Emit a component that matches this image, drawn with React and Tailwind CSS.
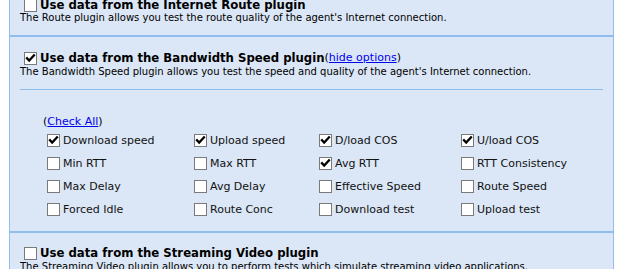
import React from "react";

const Box = ({ checked, className = "" }) => (
  <span
    className={`inline-flex h-[13px] w-[13px] shrink-0 items-center justify-center border border-[#7a7a7a] bg-white ${className}`}
  >
    {checked && (
      <svg width="11" height="11" viewBox="0 0 11 11">
        <path d="M2 5.2 L4.2 7.6 L9 2.4" fill="none" stroke="#000" strokeWidth="2.3" strokeLinecap="square" />
      </svg>
    )}
  </span>
);

const Title = ({ checked, children, extra }) => (
  <div className="flex h-[16px] items-center">
    <Box checked={checked} className="ml-[4px] mr-[3px]" />
    <span
      className="text-[13px] font-bold leading-[16px] text-black"
      style={{ fontFamily: '"DejaVu Sans Condensed", "DejaVu Sans", sans-serif', fontStretch: "condensed" }}
    >
      {children}
    </span>
    {extra}
  </div>
);

const Desc = ({ children, className = "" }) => (
  <div className={`h-[12px] text-[10px] leading-[12px] whitespace-nowrap text-black ${className}`}>{children}</div>
);

const items = [
  ["Download speed", true],
  ["Upload speed", true],
  ["D/load COS", true],
  ["U/load COS", true],
  ["Min RTT", false],
  ["Max RTT", false],
  ["Avg RTT", true],
  ["RTT Consistency", false],
  ["Max Delay", false],
  ["Avg Delay", false],
  ["Effective Speed", false],
  ["Route Speed", false],
  ["Forced Idle", false],
  ["Route Conc", false],
  ["Download test", false],
  ["Upload test", false],
];

export default function App() {
  return (
    <div
      className="h-[269px] w-[624px] overflow-hidden bg-white pl-[9px]"
      style={{ fontFamily: '"DejaVu Sans", Verdana, sans-serif' }}
    >
      <div className="h-[300px] w-[605px] border-x border-[#8ebdee] bg-[#dbe7f6]">
        {/* Section 1 */}
        <div className="border-b-2 border-[#8ebdee] px-[10px] pb-[11px]">
          <div className="mt-[-3px]">
            <Title checked={false}>Use data from the Internet Route plugin</Title>
          </div>
          <Desc className="mt-[-1px]">
            The Route plugin allows you test the route quality of the agent's Internet connection.
          </Desc>
        </div>

        {/* Section 2 */}
        <div className="border-b-2 border-[#8ebdee] px-[10px] pt-[13px] pb-[10px]">
          <Title
            checked={true}
            extra={
              <span className="text-[11px] leading-[16px] text-black">
                (<span className="text-[#0000ee] underline">hide options</span>)
              </span>
            }
          >
            Use data from the Bandwidth Speed plugin
          </Title>
          <Desc>
            The Bandwidth Speed plugin allows you test the speed and quality of the agent's Internet connection.
          </Desc>
          <div className="mt-[11px] h-px bg-[#8ebdee]" />
          <div className="pl-[23px] pt-[25px]">
            <div className="h-[14px] text-[11px] leading-[14px] text-black">
              (<span className="text-[#0000ee] underline">Check All</span>)
            </div>
            <div className="grid grid-cols-[147px_125px_142px_1fr]">
              {items.map(([label, checked]) => (
                <div key={label} className="flex h-[23px] items-center">
                  <Box checked={checked} className="ml-[4px] mr-[3px]" />
                  <span className="text-[11px] leading-[14px] whitespace-nowrap text-[#111]">{label}</span>
                </div>
              ))}
            </div>
          </div>
        </div>

        {/* Section 3 */}
        <div className="px-[10px] pt-[12px]">
          <Title checked={false}>Use data from the Streaming Video plugin</Title>
          <Desc>
            The Streaming Video plugin allows you to perform tests which simulate streaming video applications.
          </Desc>
        </div>
      </div>
    </div>
  );
}
